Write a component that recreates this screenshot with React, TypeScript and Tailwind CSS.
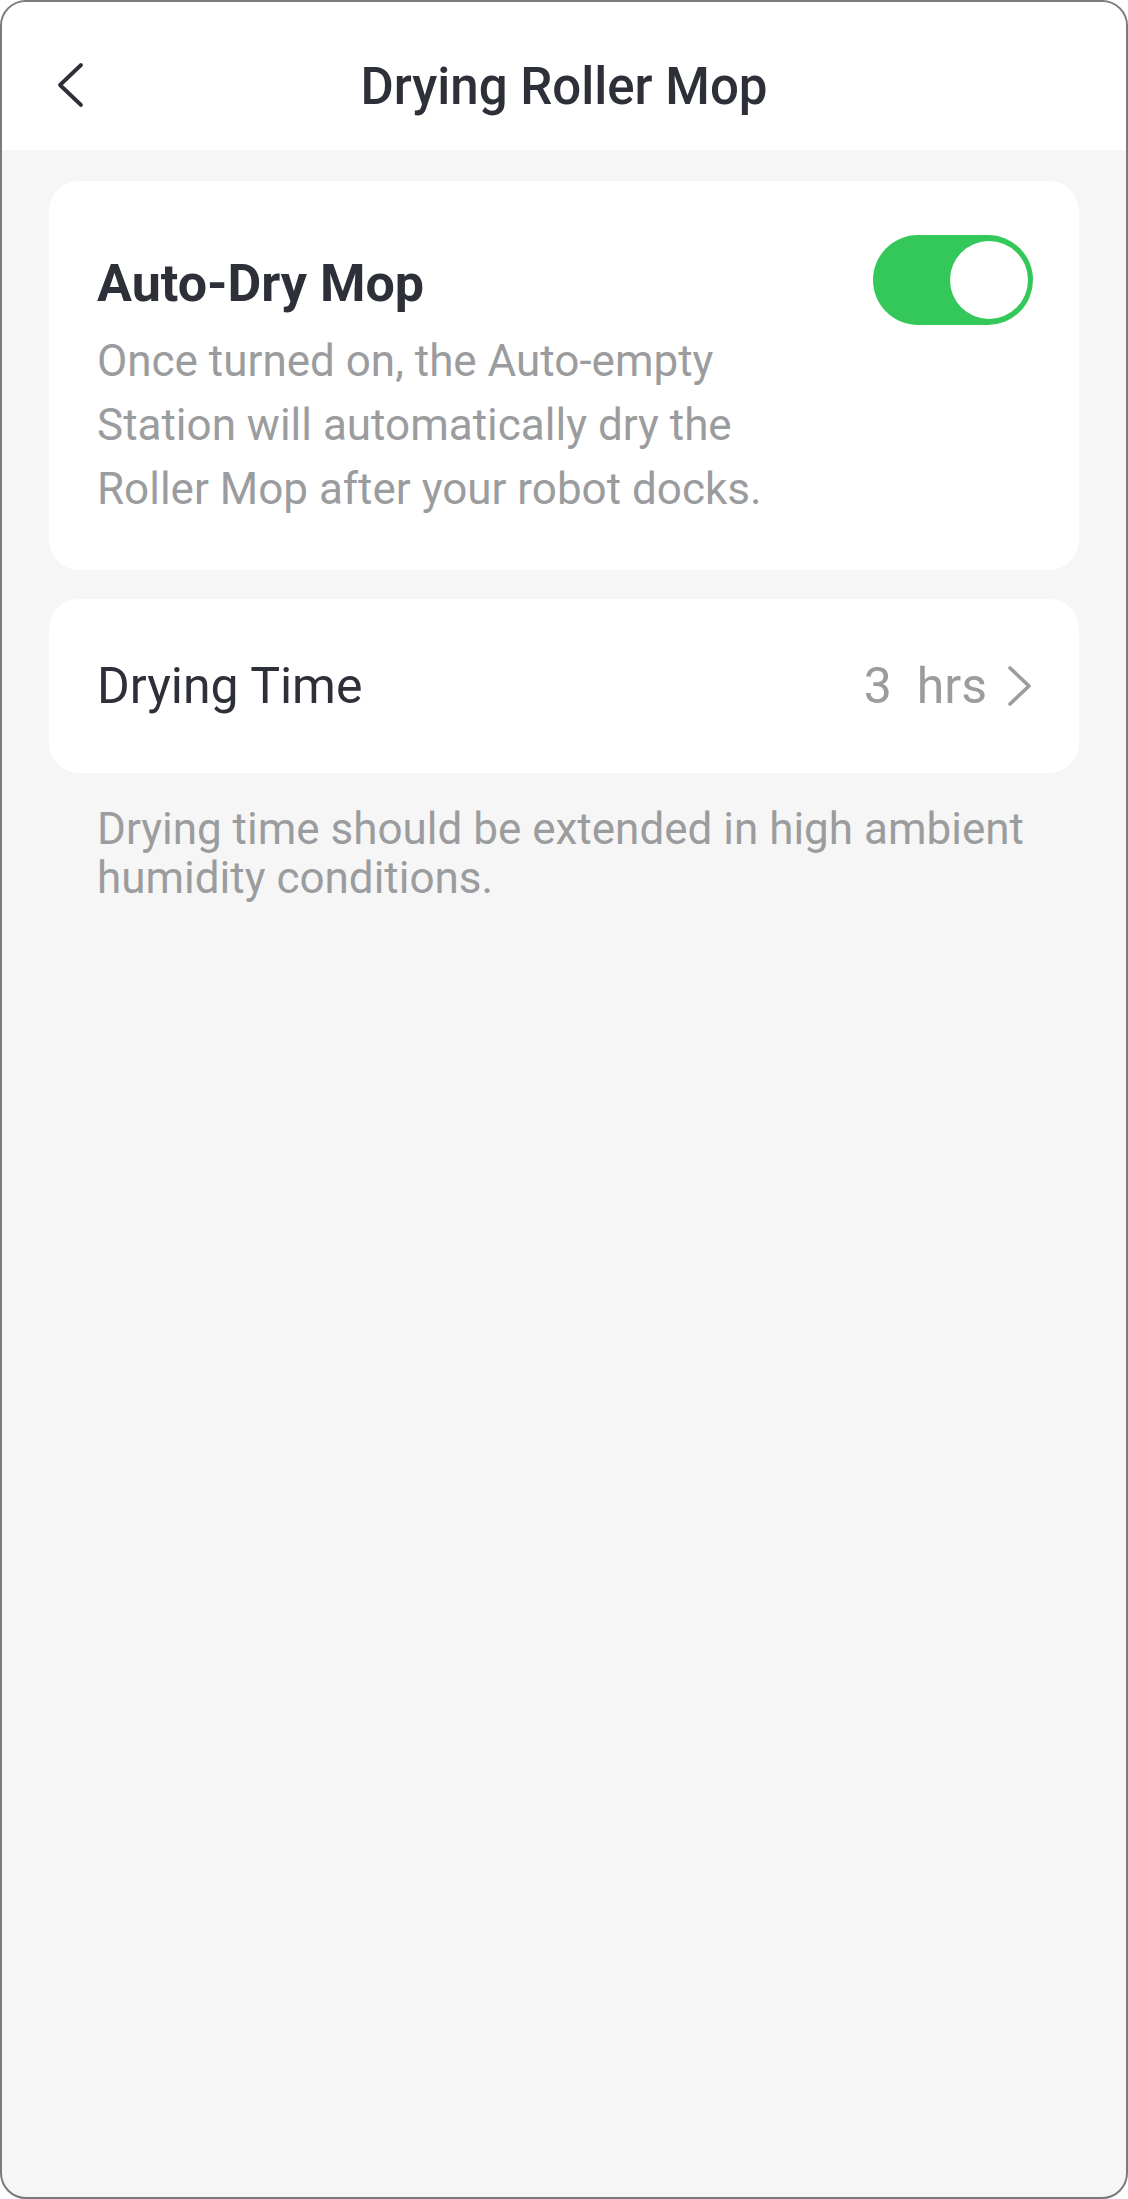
import React from "react";

export default function App() {
  return (
    <div
      className="w-[1128px] h-[2199px] bg-[#f6f6f6] border-2 border-[#7a7a7a] rounded-[26px] overflow-hidden flex flex-col"
      style={{ fontFamily: "Roboto, 'Noto Sans', sans-serif" }}
    >
      <header className="h-[148px] bg-white flex items-start justify-center pt-[55px] relative shrink-0">
        <svg
          className="absolute left-[53px] top-[60px]"
          width="30"
          height="46"
          viewBox="0 0 30 46"
          fill="none"
        >
          <path d="M26 3 L5 23 L26 43" stroke="#2e3039" strokeWidth="3.8" strokeLinecap="round" strokeLinejoin="round" />
        </svg>
        <h1 className="text-[51px] font-medium text-[#2e3039] leading-[60px]">
          Drying Roller Mop
        </h1>
      </header>

      <main className="px-[47px] pt-[31px] flex flex-col">
        <section className="bg-white rounded-[30px] h-[389px] pl-[48px] pr-[46px] pt-[54px] flex justify-between">
          <div className="flex flex-col">
            <h2 className="text-[52px] font-bold text-[#2e3039] leading-[56px] mt-[21px]">
              Auto-Dry Mop
            </h2>
            <p className="text-[44px] text-[#9b9c9e] leading-[64px] mt-[17px] w-[720px]">
              Once turned on, the Auto-empty
              <br />
              Station will automatically dry the
              <br />
              Roller Mop after your robot docks.
            </p>
          </div>
          <div className="w-[160px] h-[90px] rounded-full bg-[#34c759] pt-[6px] pr-[5px] flex justify-end shrink-0">
            <div className="w-[78px] h-[78px] rounded-full bg-white" />
          </div>
        </section>

        <section className="bg-white rounded-[30px] h-[174px] mt-[29px] pl-[48px] pr-[46px] flex items-center justify-between">
          <span className="text-[50px] text-[#2e3039] leading-[60px]">Drying Time</span>
          <div className="flex items-center gap-[20px] text-[#9b9c9e]">
            <span className="text-[50px] leading-[60px]">3&nbsp;&nbsp;hrs</span>
            <svg width="26" height="42" viewBox="0 0 26 42" fill="none">
              <path d="M3 3 L22 21 L3 39" stroke="#9b9c9e" strokeWidth="3.6" strokeLinecap="round" strokeLinejoin="round" />
            </svg>
          </div>
        </section>

        <p className="text-[44px] text-[#9b9c9e] leading-[49px] mt-[32px] px-[48px]">
          Drying time should be extended in high ambient humidity conditions.
        </p>
      </main>
    </div>
  );
}
